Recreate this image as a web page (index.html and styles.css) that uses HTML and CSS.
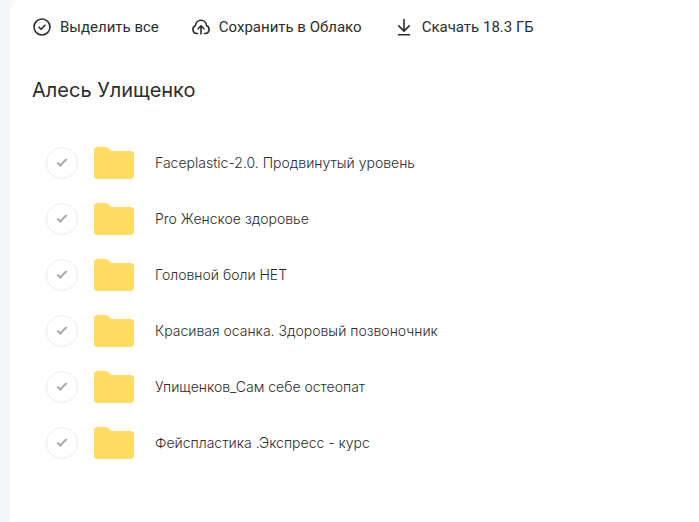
FILE: index.html
```
<!DOCTYPE html>
<html lang="ru">

<head>
    <meta charset="UTF-8">
    <meta name="viewport" content="width=device-width, initial-scale=1.0">
    <title>Алесь Улищенко</title>
    <link rel="stylesheet" href="styles.css">
</head>

<body>
    <svg width="0" height="0" class="sprite" aria-hidden="true">
        <symbol id="folder" viewBox="0 0 40 32">
            <path fill="#ffdc66" d="M0 3a3 3 0 0 1 3-3h8.500c1.300 0 2.100.3 3 1.200l1.600 1.600c.8.800 1.600 1.200 3 1.200H37a3 3 0 0 1 3 3v22a3 3 0 0 1-3 3H3a3 3 0 0 1-3-3z"/>
        </symbol>
    </svg>
    <main class="page">
        <div class="toolbar">
            <button type="button" class="tool">
                <svg class="icon" viewBox="0 0 20 20">
                    <circle cx="10" cy="10" r="8"/>
                    <path d="M7 10.200l2.100 2.100L13 8.300"/>
                </svg>
                Выделить все
            </button>
            <button type="button" class="tool">
                <svg class="icon" viewBox="0 0 20 20">
                    <path d="M6.500 16.500H5.700A4 4 0 0 1 4.400 8.800C4.600 5.600 7 3.300 10 3.300s5.400 2.300 5.600 5.500a4 4 0 0 1-1.300 7.700h-.8"/>
                    <path d="M10 17V9M7 11.700l3-3 3 3"/>
                </svg>
                Сохранить в Облако
            </button>
            <button type="button" class="tool">
                <svg class="icon" viewBox="0 0 20 20">
                    <path d="M10 2.500v11.500M4.800 8.900l5.200 5.200 5.200-5.200M4.500 17.800h11"/>
                </svg>
                Скачать 18.3 ГБ
            </button>
        </div>

        <h1 class="title">Алесь Улищенко</h1>

        <ul class="files">
            <li class="file">
                <input type="checkbox" class="check" aria-labelledby="f1">
                <svg class="folder"><use href="#folder"/></svg>
                <a href="#" class="name" id="f1">Faceplastic-2.0. Продвинутый уровень</a>
            </li>
            <li class="file">
                <input type="checkbox" class="check" aria-labelledby="f2">
                <svg class="folder"><use href="#folder"/></svg>
                <a href="#" class="name" id="f2">Pro Женское здоровье</a>
            </li>
            <li class="file">
                <input type="checkbox" class="check" aria-labelledby="f3">
                <svg class="folder"><use href="#folder"/></svg>
                <a href="#" class="name" id="f3">Головной боли НЕТ</a>
            </li>
            <li class="file">
                <input type="checkbox" class="check" aria-labelledby="f4">
                <svg class="folder"><use href="#folder"/></svg>
                <a href="#" class="name" id="f4">Красивая осанка. Здоровый позвоночник</a>
            </li>
            <li class="file">
                <input type="checkbox" class="check" aria-labelledby="f5">
                <svg class="folder"><use href="#folder"/></svg>
                <a href="#" class="name" id="f5">Упищенков_Сам себе остеопат</a>
            </li>
            <li class="file">
                <input type="checkbox" class="check" aria-labelledby="f6">
                <svg class="folder"><use href="#folder"/></svg>
                <a href="#" class="name" id="f6">Фейспластика .Экспресс - курс</a>
            </li>
        </ul>
    </main>
</body>

</html>
```
FILE: styles.css
```
* {
    box-sizing: border-box;
}

body {
    margin: 0;
    padding-left: 10px;
    background: #f6f7f8;
    color: #2c2d2e;
    font-family: Inter, "Liberation Sans", sans-serif;
}

.sprite {
    display: block;
}

.page {
    min-height: 100vh;
    padding: 15px 22px;
    background: #fff;
    border-top-left-radius: 12px;
}

.toolbar {
    display: flex;
    gap: 32px;
}

.tool {
    display: flex;
    align-items: center;
    gap: 8px;
    padding: 0;
    border: none;
    background: none;
    color: inherit;
    font: 15px/24px Roboto, "Liberation Sans", sans-serif;
    cursor: pointer;
}

.icon {
    width: 20px;
    height: 20px;
    fill: none;
    stroke: currentColor;
    stroke-width: 1.6;
    stroke-linecap: round;
    stroke-linejoin: round;
}

.title {
    margin: 37px 0 31px;
    font-size: 20px;
    font-weight: 400;
    line-height: 28px;
}

.files {
    margin: 0;
    padding: 0;
    list-style: none;
}

.file {
    display: flex;
    align-items: center;
    height: 56px;
    padding-left: 14px;
}

.check {
    display: grid;
    place-items: center;
    flex: none;
    width: 32px;
    height: 32px;
    margin: 0 16px 0 0;
    appearance: none;
    border: 1px solid #ececed;
    border-radius: 50%;
    cursor: pointer;
}

/* tick */
.check::before {
    content: "";
    box-sizing: border-box;
    width: 10px;
    height: 5px;
    margin-bottom: 3px;
    border: solid #a8a9aa;
    border-width: 0 0 2px 2px;
    transform: rotate(-45deg);
}

.check:checked {
    background: #005ff9;
}

.folder {
    flex: none;
    width: 40px;
    height: 32px;
    margin-right: 21px;
}

.name {
    color: inherit;
    font-size: 14px;
    font-weight: 300;
    line-height: 20px;
    text-decoration: none;
}
```
